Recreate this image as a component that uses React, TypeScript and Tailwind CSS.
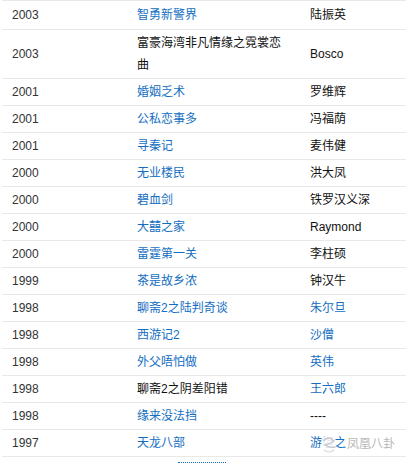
const BLUE = 'text-[#136ec2]'
const DARK = 'text-[#111]'

type Row = {
  year: string
  title: string
  titleLink: boolean
  role: string
  roleLink: boolean
}

const ROWS: Row[] = [
  { year: '2003', title: '智勇新警界', titleLink: true, role: '陆振英', roleLink: false },
  { year: '2003', title: '富豪海湾非凡情缘之霓裳恋曲', titleLink: false, role: 'Bosco', roleLink: false },
  { year: '2001', title: '婚姻乏术', titleLink: true, role: '罗维辉', roleLink: false },
  { year: '2001', title: '公私恋事多', titleLink: true, role: '冯福荫', roleLink: false },
  { year: '2001', title: '寻秦记', titleLink: true, role: '麦伟健', roleLink: false },
  { year: '2000', title: '无业楼民', titleLink: true, role: '洪大凤', roleLink: false },
  { year: '2000', title: '碧血剑', titleLink: true, role: '铁罗汉义深', roleLink: false },
  { year: '2000', title: '大囍之家', titleLink: true, role: 'Raymond', roleLink: false },
  { year: '2000', title: '雷霆第一关', titleLink: true, role: '李柱硕', roleLink: false },
  { year: '1999', title: '茶是故乡浓', titleLink: true, role: '钟汉牛', roleLink: false },
  { year: '1998', title: '聊斋2之陆判奇谈', titleLink: true, role: '朱尔旦', roleLink: true },
  { year: '1998', title: '西游记2', titleLink: true, role: '沙僧', roleLink: true },
  { year: '1998', title: '外父唔怕做', titleLink: true, role: '英伟', roleLink: true },
  { year: '1998', title: '聊斋2之阴差阳错', titleLink: false, role: '王六郎', roleLink: true },
  { year: '1998', title: '缘来没法挡', titleLink: true, role: '----', roleLink: false },
  { year: '1997', title: '天龙八部', titleLink: true, role: '游坦之', roleLink: true },
]

// 公众号水印，盖在最后一行右侧
function Watermark() {
  return (
    <div className="pointer-events-none absolute left-[21px] top-[1px] flex items-center">
      <svg width="16" height="22" viewBox="0 0 16 22" className="mr-[10px]">
        <ellipse cx="8" cy="11" rx="7.5" ry="9" fill="white" fillOpacity="0.85" />
        <path d="M2 8 Q8 2 13 8 Q9 11 4 12 Q8 15 14 14" fill="none" stroke="#c8c8c8" strokeWidth="1.3" />
        <path d="M3 17 Q8 21 13 17" fill="none" stroke="#d5d5d5" strokeWidth="1.2" />
      </svg>
      <span className="text-[#b8b8b8]">凤凰八卦</span>
    </div>
  )
}

export default function App() {
  return (
    <div className="h-[463px] w-[407px] overflow-hidden bg-white font-['Liberation_Sans','Noto_Sans_CJK_SC',sans-serif] text-[12px]">
      <div className="ml-[2px] w-[404px] border-t border-[#e8e8e8]">
        {ROWS.map((r, i) => (
          <div
            key={i}
            className={`flex items-center border-b border-[#e8e8e8] leading-[22px] ${i === 0 ? 'py-[3px]' : 'py-[2px]'}`}
          >
            <div className="w-[125px] shrink-0 pl-[10px] text-[#333]">{r.year}</div>
            <div className={`w-[173px] shrink-0 pl-[10px] pr-[10px] ${r.titleLink ? BLUE : DARK}`}>{r.title}</div>
            <div className={`relative flex-1 pl-[10px] ${r.roleLink ? BLUE : DARK}`}>
              {r.role}
              {i === ROWS.length - 1 && <Watermark />}
            </div>
          </div>
        ))}
      </div>
      <div className="ml-[178px] mt-[5px] w-[48px] border-t border-dotted border-[#136ec2]" />
    </div>
  )
}
